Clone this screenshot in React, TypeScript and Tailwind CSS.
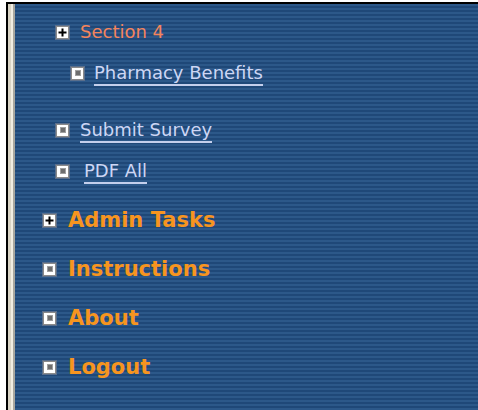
import React from "react";

type BoxKind = "plus" | "dot";

function TreeBox({ kind }: { kind: BoxKind }) {
    return (
        <span className="inline-flex w-[13px] h-[13px] shrink-0 items-center justify-center bg-white border border-[#8a8a8a] shadow-[0_0_0_1px_#5b6f8c]">
            {kind === "plus" ? (
                <svg width="9" height="9" viewBox="0 0 9 9">
                    <rect x="3.5" y="0.5" width="2" height="8" fill="#000" />
                    <rect x="0.5" y="3.5" width="8" height="2" fill="#000" />
                </svg>
            ) : (
                <span className="block w-[6px] h-[6px] bg-[#6e6e6e] border border-[#a0a0a0]" />
            )}
        </span>
    );
}

function SubLink({ label, className }: { label: string; className?: string }) {
    return (
        <a href="#" className={`text-[#cdd6f4] text-[18px] leading-none pb-[2px] border-b-2 border-[#c4cfec] ${className ?? ""}`}>
            {label}
        </a>
    );
}

const topItems: { label: string; kind: BoxKind }[] = [
    { label: "Admin Tasks", kind: "plus" },
    { label: "Instructions", kind: "dot" },
    { label: "About", kind: "dot" },
    { label: "Logout", kind: "dot" },
];

export default function App() {
    return (
        <div className="w-[478px] h-[410px] overflow-hidden bg-white pt-[2px] pl-[6px] font-['DejaVu_Sans',Verdana,sans-serif]">
            <div className="h-full flex border-t-2 border-l-2 border-black">
                {/* bevelled frame edge */}
                <div className="flex shrink-0">
                    <div className="w-[3px] bg-[#d8d3c4]" />
                    <div className="w-[2px] bg-[#f1ede2]" />
                    <div className="w-[2px] bg-[#a9a79f]" />
                </div>
                <nav className="flex-1 flex flex-col pt-[14px] pl-[41px] bg-[repeating-linear-gradient(180deg,#2c5889_0px,#2c5889_2px,#1f4878_2px,#1f4878_4px)]">
                    <div className="h-[28px] flex items-center gap-[11px]">
                        <TreeBox kind="plus" />
                        <span className="text-[#f4845c] text-[18px] leading-none">Section 4</span>
                    </div>
                    <div className="h-[28px] mt-[13px] ml-[15px] flex items-center gap-[10px]">
                        <TreeBox kind="dot" />
                        <SubLink label="Pharmacy Benefits" className="mt-[4px]" />
                    </div>
                    <div className="h-[28px] mt-[29px] flex items-center gap-[11px]">
                        <TreeBox kind="dot" />
                        <SubLink label="Submit Survey" className="mt-[4px]" />
                    </div>
                    <div className="h-[28px] mt-[13px] flex items-center gap-[11px]">
                        <TreeBox kind="dot" />
                        <SubLink label="PDF All" className="mt-[4px] ml-[4px]" />
                    </div>
                    <div className="-ml-[13px] flex flex-col">
                        {topItems.map((item) => (
                            <div key={item.label} className="h-[28px] mt-[21px] flex items-center gap-[12px]">
                                <TreeBox kind={item.kind} />
                                <span className="text-[#f7951f] text-[21px] font-bold leading-none">{item.label}</span>
                            </div>
                        ))}
                    </div>
                </nav>
            </div>
        </div>
    );
}
